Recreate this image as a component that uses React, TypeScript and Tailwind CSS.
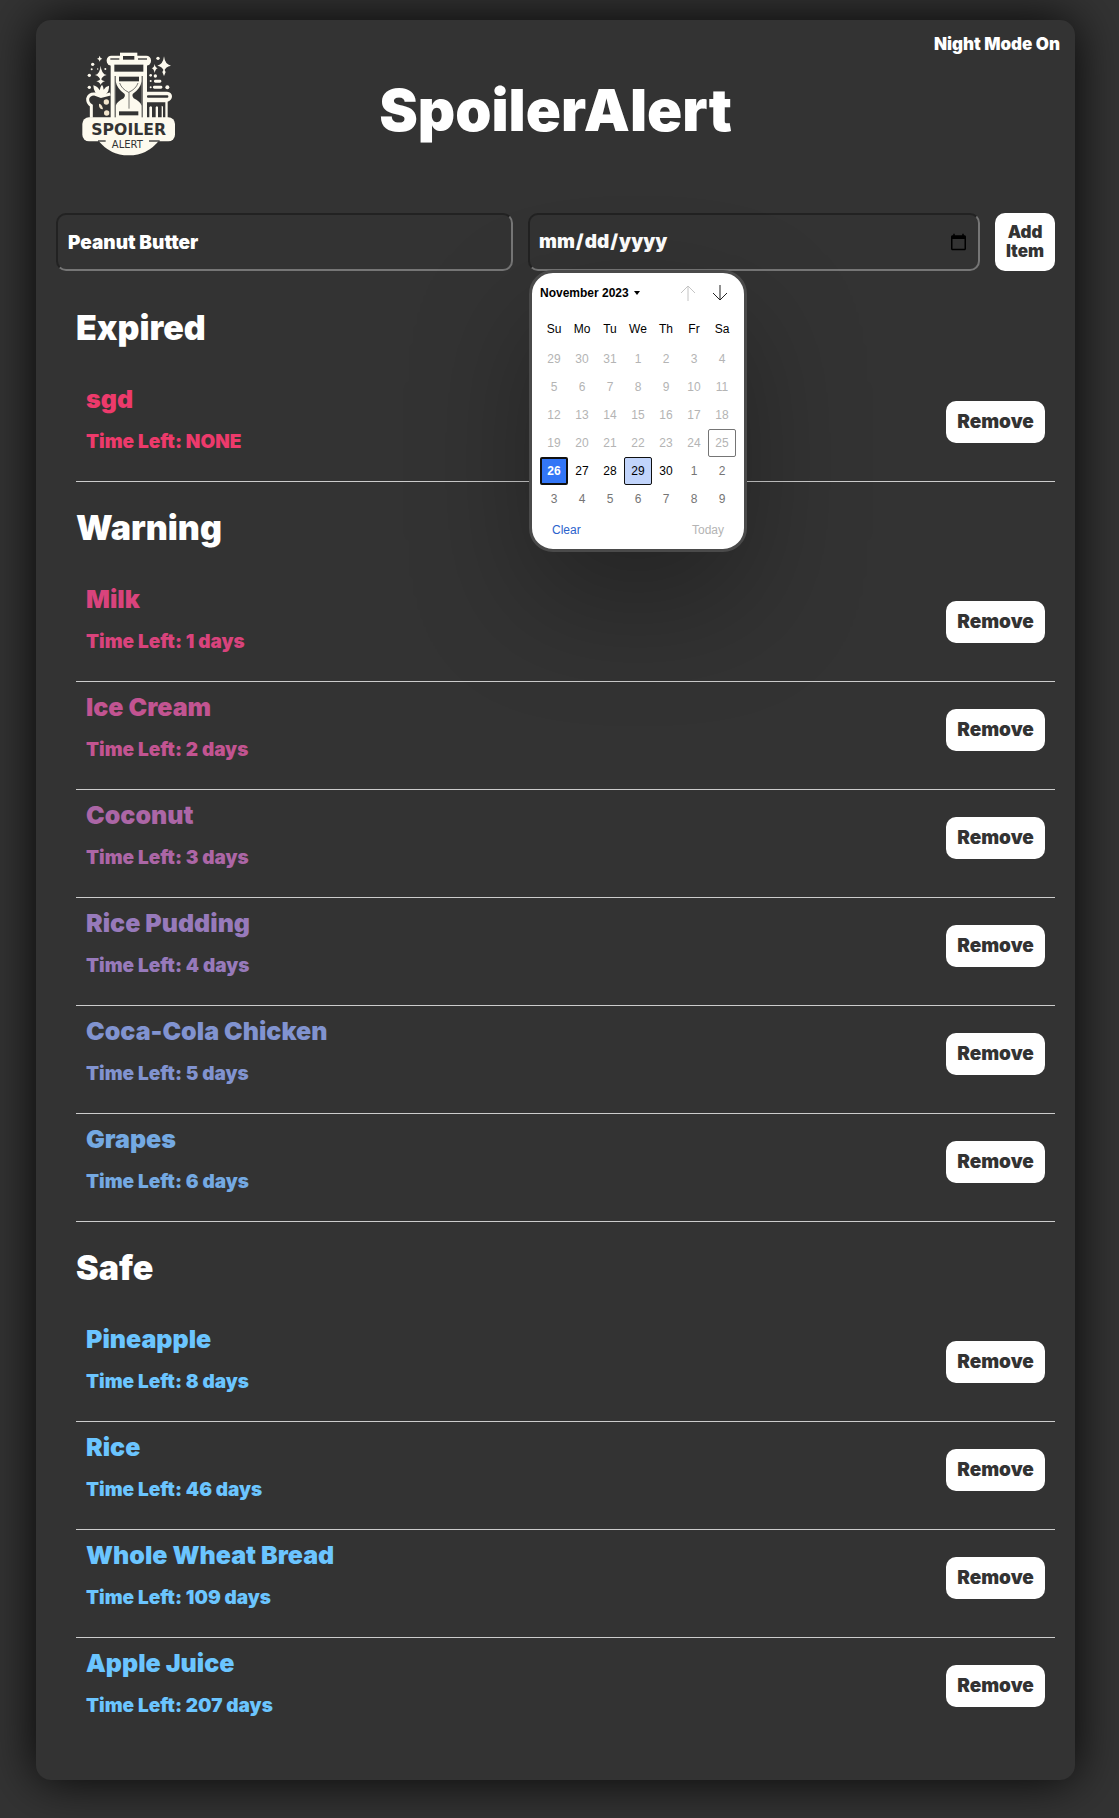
import { useState } from 'react'

type Item = { name: string; left: string; color: string }
type Day = { label: number; kind: 'past' | 'current' | 'next' | 'focus' | 'hover' | 'outlined' }

const expired: Item[] = [{ name: 'sgd', left: 'NONE', color: 'text-[#ed3a6b]' }]

const warning: Item[] = [
  { name: 'Milk', left: '1 days', color: 'text-[#d9437c]' },
  { name: 'Ice Cream', left: '2 days', color: 'text-[#c25491]' },
  { name: 'Coconut', left: '3 days', color: 'text-[#ac66a6]' },
  { name: 'Rice Pudding', left: '4 days', color: 'text-[#977abb]' },
  { name: 'Coca-Cola Chicken', left: '5 days', color: 'text-[#8193d0]' },
  { name: 'Grapes', left: '6 days', color: 'text-[#74a9e2]' },
]

const safe: Item[] = [
  { name: 'Pineapple', left: '8 days', color: 'text-[#6bc5ff]' },
  { name: 'Rice', left: '46 days', color: 'text-[#6bc5ff]' },
  { name: 'Whole Wheat Bread', left: '109 days', color: 'text-[#6bc5ff]' },
  { name: 'Apple Juice', left: '207 days', color: 'text-[#6bc5ff]' },
]

const dayClass: Record<Day['kind'], string> = {
  past: 'text-[#b4b4b4] border border-transparent',
  current: 'text-black border border-transparent',
  next: 'text-[#757575] border border-transparent',
  focus: 'bg-[#3376f6] text-white font-bold border-2 border-[#101010]',
  hover: 'bg-[#c1d4fb] text-black border border-[#101010]',
  outlined: 'text-[#b4b4b4] border border-[#757575]',
}

const weekdays = ['Su', 'Mo', 'Tu', 'We', 'Th', 'Fr', 'Sa']

function buildWeeks(): Day[][] {
  const days: Day[] = [29, 30, 31].map((label) => ({ label, kind: 'past' }))
  for (let d = 1; d <= 30; d++) {
    if (d < 25) days.push({ label: d, kind: 'past' })
    else if (d === 25) days.push({ label: d, kind: 'outlined' })
    else if (d === 26) days.push({ label: d, kind: 'focus' })
    else if (d === 29) days.push({ label: d, kind: 'hover' })
    else days.push({ label: d, kind: 'current' })
  }
  for (let d = 1; d <= 9; d++) days.push({ label: d, kind: 'next' })
  return [0, 1, 2, 3, 4, 5].map((w) => days.slice(w * 7, w * 7 + 7))
}

const weeks = buildWeeks()

const inputClass = [
  'h-[58px] w-full min-w-0 rounded-[10px] border-2 bg-[#333] text-[19px] font-black text-white outline-none',
  'border-t-[#222] border-l-[#222] border-r-[#767676] border-b-[#767676]',
].join(' ')

function Logo() {
  return (
    <svg className="h-[104px] w-[94px]" viewBox="65 67 282 312" role="img" aria-label="Spoiler Alert">
      <g fill="#fdfaee">
        {/* jar lid and body */}
        <rect x="139" y="78" width="133" height="30" rx="14" />
        <rect x="179" y="69" width="52" height="22" />
        <rect x="151" y="96" width="109" height="172" />
        {/* banner and base */}
        <path d="M112 330 H298 Q262 377 205 377 Q148 377 112 330Z" />
        <rect x="66" y="263" width="278" height="72" rx="20" />
        {/* basket */}
        <path d="M260 186 H320 Q335 188 335 200 Q335 212 322 216 V265 H260Z" />
        {/* sparkles */}
        <path d="M121 108 Q123 133 139 136 Q123 139 121 156 Q119 139 104 136 Q119 133 121 108Z" />
        <path d="M121 146 Q123 153 134 155 Q123 158 121 166 Q119 158 108 155 Q119 153 121 146Z" />
        <path d="M118 78 Q119 86 126 87 Q119 89 118 96 Q117 89 110 87 Q117 86 118 78Z" />
        <path d="M311 80 Q314 105 332 108 Q314 111 311 126 Q308 111 291 108 Q308 105 311 80Z" />
        <path d="M283 103 Q285 114 292 116 Q285 118 283 130 Q281 118 274 116 Q281 114 283 103Z" />
        <path d="M311 119 L316 127 L311 139 L306 127Z" />
        <circle cx="97" cy="104" r="5" />
        <circle cx="94" cy="119" r="3" />
        <circle cx="112" cy="118" r="2" />
        <circle cx="135" cy="118" r="3" />
        <circle cx="87" cy="137" r="5" />
        <circle cx="87" cy="173" r="5" />
        <circle cx="293" cy="86" r="5" />
        <circle cx="271" cy="137" r="4" />
        <circle cx="285" cy="139" r="5" />
        <circle cx="271" cy="154" r="3" />
        <circle cx="271" cy="173" r="3" />
        <circle cx="321" cy="173" r="6" />
        <rect x="281" y="150" width="22" height="9" rx="4" />
        <rect x="278" y="168" width="28" height="9" rx="4" />
      </g>
      {/* bread and leaves */}
      <path
        d="M93 264 V228 Q81 221 82 207 Q86 192 103 193 L122 200 L150 193"
        fill="none"
        stroke="#fdfaee"
        strokeWidth="9"
      />
      <path
        d="M99 167 Q112 170 118 182 Q120 170 125 165 Q130 172 130 180 Q136 170 146 168 Q147 184 137 193 L122 202 L106 191 Q99 180 99 167Z"
        fill="#fdfaee"
      />
      <g fill="#f3e6cd">
        <circle cx="138" cy="217" r="8" />
        <circle cx="139" cy="250" r="8" />
        <path d="M116 222 Q126 224 128 239 Q114 238 116 222Z" />
      </g>
      <g fill="#333">
        <rect x="150" y="86" width="27" height="4" />
        <rect x="233" y="86" width="27" height="4" />
        <rect x="188" y="79" width="34" height="11" />
        <rect x="162" y="105" width="87" height="21" />
        <rect x="163" y="139" width="3" height="124" />
        <rect x="244" y="139" width="3" height="124" />
        {/* hourglass */}
        <path d="M176 141 H236 V155 H176Z" />
        <path d="M166 155 Q170 178 193 193 Q196 199 190 206 Q172 214 166 228Z" />
        <path d="M244 155 Q240 178 217 193 Q214 199 220 206 Q238 214 244 228Z" />
        <rect x="176" y="245" width="58" height="12" />
        {/* basket slots */}
        <rect x="260" y="197" width="64" height="7" rx="3" />
        <path d="M260 218 H315 V263 H308 V233 Q308 228 304 228 V263 H293 V233 Q290 226 286 233 V263 H275 V233 Q272 226 267 233 V263 H260Z" />
        <rect x="113" y="332" width="23" height="4" />
        <rect x="266" y="332" width="32" height="4" />
      </g>
      <path d="M178 160 Q184 178 205 188 Q227 178 233 160 M206 188 V237" fill="none" stroke="#333" strokeWidth="2" />
      <g fill="#333" fontFamily="'DejaVu Sans', sans-serif" textAnchor="middle">
        <text x="205" y="315" fontSize="47" fontWeight="700">
          SPOILER
        </text>
        <text x="201" y="354" fontSize="30">
          ALERT
        </text>
      </g>
    </svg>
  )
}

function ItemRow({ item, last }: { item: Item; last?: boolean }) {
  return (
    <li
      className={`flex h-[108px] items-start justify-between border-b px-2.5 pt-2.5 ${
        last ? 'border-transparent' : 'border-[#ccc]'
      }`}
    >
      <div className={`font-black ${item.color}`}>
        <h3 className="text-[25px] leading-[30px]">{item.name}</h3>
        <p className="mt-[18px] text-[19px] leading-5">Time Left: {item.left}</p>
      </div>
      <button
        type="button"
        className="mt-[17px] h-[42px] w-[99px] rounded-[10px] bg-white text-[19px] font-black text-[#333]"
      >
        Remove
      </button>
    </li>
  )
}

function Section({ title, items, end }: { title: string; items: Item[]; end?: boolean }) {
  return (
    <section className="pl-5">
      <h2 className="py-[26px] text-[34px] leading-10 font-black text-white">{title}</h2>
      <ul>
        {items.map((item, i) => (
          <ItemRow key={item.name} item={item} last={end && i === items.length - 1} />
        ))}
      </ul>
    </section>
  )
}

function DatePopup() {
  return (
    <div className="absolute top-[57px] left-px z-10 w-[218px] rounded-[24px] border-3 border-[#4a4a4a] bg-white px-2 font-['Liberation_Sans',sans-serif] text-xs text-black shadow-[0_50px_120px_rgba(0,0,0,0.3)]">
      <div className="flex h-10 items-center">
        <button type="button" className="flex items-center gap-1 font-bold">
          November 2023
          <svg className="h-1 w-2" viewBox="0 0 8 4">
            <path d="M1 0h6L4 4z" />
          </svg>
        </button>
        <button type="button" aria-label="Previous month" className="ml-auto flex w-8 justify-center text-[#c4c4c4]">
          <svg className="h-4 w-4" viewBox="0 0 16 16" fill="none" stroke="currentColor">
            <path d="M8 16V1M1 8l7-7 7 7" />
          </svg>
        </button>
        <button type="button" aria-label="Next month" className="flex w-8 justify-center text-[#222]">
          <svg className="h-4 w-4" viewBox="0 0 16 16" fill="none" stroke="currentColor">
            <path d="M8 0v15M1 8l7 7 7-7" />
          </svg>
        </button>
      </div>
      <table className="mx-auto w-[196px] table-fixed border-collapse text-center">
        <thead>
          <tr className="h-8">
            {weekdays.map((d) => (
              <th key={d} className="p-0 font-normal">
                {d}
              </th>
            ))}
          </tr>
        </thead>
        <tbody>
          {weeks.map((week, w) => (
            <tr key={w}>
              {week.map((day, i) => (
                <td key={i} className="p-0">
                  <button
                    type="button"
                    className={`flex h-7 w-full items-center justify-center rounded-[2px] ${dayClass[day.kind]}`}
                  >
                    {day.label}
                  </button>
                </td>
              ))}
            </tr>
          ))}
        </tbody>
      </table>
      <div className="flex h-9 items-center justify-between px-3 pb-0.5">
        <button type="button" className="text-[#2a62cc]">
          Clear
        </button>
        <button type="button" className="text-[#b4b4b4]">
          Today
        </button>
      </div>
    </div>
  )
}

export default function App() {
  const [name, setName] = useState('Peanut Butter')

  return (
    <div className="min-h-screen overflow-hidden bg-[#333] pt-5 pr-11 pb-[38px] pl-9 font-['Inter',sans-serif]">
      <main className="relative rounded-[15px] bg-[#333] px-5 pb-[34px] shadow-[0_0_50px_rgba(0,0,0,0.9)]">
        <button type="button" className="absolute top-3 right-[15px] text-[17px] leading-6 font-black text-white">
          Night Mode On
        </button>

        <header className="grid h-[193px] grid-cols-[120px_1fr_120px] items-start pt-8">
          <div className="pl-[26px]">
            <Logo />
          </div>
          <h1 className="pt-6 text-center text-[58px] leading-[68px] font-black text-white">SpoilerAlert</h1>
        </header>

        <form className="mb-[11px] flex gap-[15px]" onSubmit={(e) => e.preventDefault()}>
          <div className="flex min-w-0 flex-[457]">
            <input
              type="text"
              aria-label="Item name"
              value={name}
              onChange={(e) => setName(e.target.value)}
              className={`${inputClass} px-2.5`}
            />
          </div>
          <div className="relative flex min-w-0 flex-[452]">
            <input type="date" aria-label="Expiration date" className={`${inputClass} px-2`} />
            <DatePopup />
          </div>
          <button
            type="submit"
            className="w-[60px] rounded-[10px] bg-white text-[17px] leading-[19px] font-black text-[#333]"
          >
            Add Item
          </button>
        </form>

        <Section title="Expired" items={expired} />
        <Section title="Warning" items={warning} />
        <Section title="Safe" items={safe} end />
      </main>
    </div>
  )
}
